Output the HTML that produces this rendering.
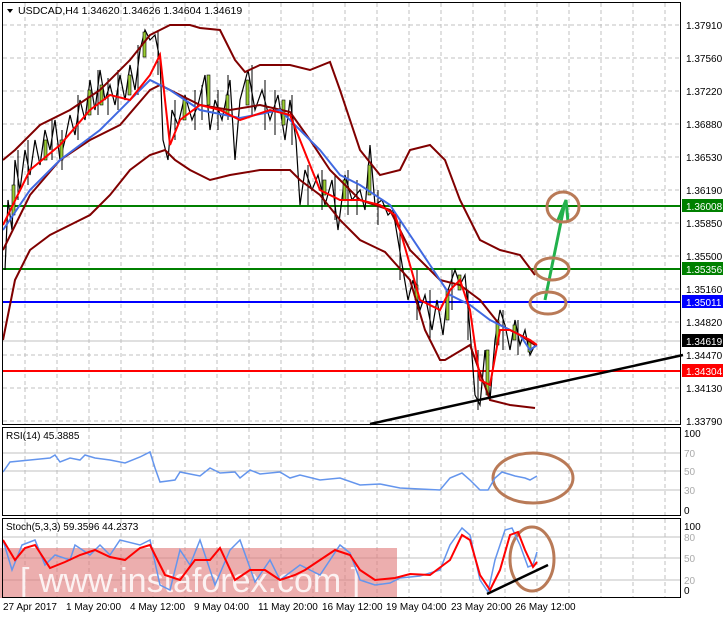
<!DOCTYPE html>
<html><head><meta charset="utf-8"><style>
body{margin:0;background:#fff;width:723px;height:618px;overflow:hidden;font-family:"Liberation Sans",sans-serif}
svg text{font-family:"Liberation Sans",sans-serif;font-size:10px}
</style></head><body>
<svg width="723" height="618" viewBox="0 0 723 618" xmlns="http://www.w3.org/2000/svg">
<rect width="723" height="618" fill="#fff"/>
<g stroke="#c0c0c0" stroke-dasharray="4,3" stroke-width="1">
<path d="M25 3V424M57 3V424M89 3V424M121 3V424M153 3V424M185 3V424M217 3V424M249 3V424M281 3V424M313 3V424M345 3V424M377 3V424M409 3V424M441 3V424M473 3V424M505 3V424M537 3V424M569 3V424M601 3V424M633 3V424M665 3V424"/>
<path d="M3 25H680M3 58H680M3 91H680M3 124H680M3 157H680M3 190H680M3 223H680M3 256H680M3 289H680M3 322H680M3 355H680M3 388H680M3 421H680"/>
<path d="M25 428V515M57 428V515M89 428V515M121 428V515M153 428V515M185 428V515M217 428V515M249 428V515M281 428V515M313 428V515M345 428V515M377 428V515M409 428V515M441 428V515M473 428V515M505 428V515M537 428V515M569 428V515M601 428V515M633 428V515M665 428V515"/>
<path d="M25 519V597M57 519V597M89 519V597M121 519V597M153 519V597M185 519V597M217 519V597M249 519V597M281 519V597M313 519V597M345 519V597M377 519V597M409 519V597M441 519V597M473 519V597M505 519V597M537 519V597M569 519V597M601 519V597M633 519V597M665 519V597"/>
</g>
<g stroke="#c0c0c0"><path d="M3 453H680M3 471H680M3 490H680M3 537H680M3 558H680M3 580H680"/></g>
<rect x="0" y="548" width="397" height="50" fill="#e07878" opacity="0.6"/>
<text x="20" y="592" fill="#fff" style="font-size:34px" opacity="0.85">[  www.instaforex.com  ]</text>
<path d="M3 206H680" stroke="#008000" stroke-width="2"/>
<path d="M3 269H680" stroke="#008000" stroke-width="2"/>
<path d="M3 302H680" stroke="#0000ff" stroke-width="2"/>
<path d="M3 341H680" stroke="#c0c0c0"/>
<path d="M3 371H680" stroke="#ff0000" stroke-width="2"/>
<polyline fill="none" stroke="#000" stroke-width="1.2" points="5,270 8,200 12,230 15,160 20,190 25,150 30,175 35,140 40,165 45,130 50,150 55,120 60,160 65,140 70,115 75,135 80,100 85,120 90,80 95,110 100,70 105,100 110,85 115,105 120,75 125,100 130,65 135,90 140,50 145,30 150,40 155,35 160,60 163,140 168,160 172,110 178,125 185,95 192,120 198,105 205,75 210,130 215,100 222,120 230,80 235,160 240,100 248,70 255,110 262,90 270,120 278,95 285,140 290,100 296,140 300,205 305,170 312,190 318,175 325,205 332,180 338,230 345,175 352,200 360,190 365,210 370,145 375,205 382,200 388,215 393,210 398,240 403,270 408,300 413,280 420,310 425,295 432,330 437,300 443,335 448,290 455,270 460,285 465,275 470,330 475,395 480,405 485,350 490,400 495,340 500,310 505,325 510,350 515,320 520,345 525,330 530,355 535,345"/>
<g stroke="#000" stroke-width="1"><path d="M18 150V200M28 140V185M52 120V160M62 130V170M78 95V140M98 70V115M108 78V115M118 70V110M138 45V95M158 30V75M175 100V140M195 90V130M202 85V120M218 90V130M228 75V120M252 65V115M265 80V130M275 90V135M292 95V145M308 165V205M322 170V210M335 175V220M348 170V215M357 180V215M378 190V225M400 220V280M417 270V320M430 290V340M452 270V310M468 290V340M478 350V410M503 310V350M518 320V355"/></g>
<g fill="#9acd32" stroke="#000" stroke-width="0.6">
<rect x="12" y="185" width="3" height="30"/><rect x="44" y="140" width="3" height="20"/><rect x="88" y="90" width="3" height="25"/><rect x="128" y="75" width="3" height="20"/><rect x="143" y="32" width="3" height="25"/><rect x="183" y="100" width="3" height="20"/><rect x="207" y="75" width="3" height="30"/><rect x="246" y="80" width="3" height="25"/><rect x="282" y="100" width="3" height="25"/><rect x="343" y="180" width="3" height="20"/><rect x="368" y="165" width="3" height="30"/><rect x="446" y="290" width="3" height="30"/><rect x="458" y="275" width="3" height="15"/><rect x="486" y="350" width="3" height="45"/><rect x="496" y="320" width="3" height="25"/><rect x="513" y="325" width="3" height="15"/><rect x="528" y="340" width="3" height="12"/><rect x="60" y="140" width="3" height="20"/><rect x="100" y="85" width="3" height="20"/><rect x="226" y="95" width="3" height="20"/><rect x="323" y="180" width="3" height="15"/><rect x="415" y="285" width="3" height="15"/>
</g>
<g fill="none" stroke="#800000" stroke-width="2">
<polyline points="3,160 15,150 40,125 70,110 100,90 130,60 150,35 170,25 190,25 200,28 220,30 235,60 245,72 260,65 290,65 310,70 330,62 340,90 360,150 380,175 400,170 410,150 430,145 445,160 460,200 480,240 500,250 520,255 535,275"/>
<polyline points="3,340 15,280 30,250 50,235 70,225 90,215 110,195 130,170 150,155 165,150 175,160 190,170 210,180 230,175 260,170 290,170 300,180 320,195 340,220 360,240 385,252 410,280 425,330 440,360 445,360 470,345 490,400 510,405 535,408"/>
<polyline points="3,250 30,195 60,160 90,140 120,125 150,90 160,85 180,95 200,105 230,110 260,105 290,112 310,140 330,170 360,200 390,210 410,250 440,280 460,285 480,300 500,325 520,335 535,345"/>
</g>
<polyline fill="none" stroke="#4169e1" stroke-width="2" points="3,230 30,190 60,160 100,130 150,80 170,90 200,110 240,118 280,110 300,130 320,150 340,175 360,185 390,205 410,235 430,265 450,295 470,305 490,320 520,335 530,350 537,345"/>
<polyline fill="none" stroke="#ff0000" stroke-width="2" points="3,225 30,170 60,145 90,110 110,95 130,100 150,75 160,55 170,145 180,120 200,105 220,110 240,120 270,110 290,115 310,165 320,190 340,200 360,200 380,205 395,215 400,230 420,300 440,310 450,290 460,280 470,310 480,380 490,385 500,330 510,330 520,335 530,340 537,345"/>
<path d="M370 424L683 355" stroke="#000" stroke-width="2.5"/>
<path d="M545 300L564 207" stroke="#22b14c" stroke-width="3"/>
<path d="M558 220L566 200L568 222" fill="none" stroke="#22b14c" stroke-width="3"/>
<g fill="none" stroke="#b97a57" stroke-width="3">
<ellipse cx="563" cy="207" rx="16" ry="15"/><ellipse cx="552" cy="269" rx="17" ry="11"/><ellipse cx="548" cy="303" rx="18" ry="11"/>
<ellipse cx="533" cy="478" rx="40" ry="25"/><ellipse cx="532" cy="559" rx="22" ry="32"/>
</g>
<polyline fill="none" stroke="#6495ed" stroke-width="1.5" points="3,472 10,462 30,460 50,458 55,455 60,462 70,458 80,460 85,455 95,458 110,460 125,463 140,457 150,452 155,468 160,482 175,480 180,472 190,474 200,476 210,468 220,473 235,472 240,478 250,470 260,474 280,472 290,478 300,475 320,480 340,478 360,485 380,484 400,488 420,489 440,490 450,478 462,473 470,480 480,490 488,490 495,478 502,472 515,476 525,478 530,480 537,476"/>
<polyline fill="none" stroke="#6495ed" stroke-width="1.5" points="3,540 12,570 22,545 35,540 45,565 55,555 70,560 75,545 90,555 100,545 110,555 120,540 140,545 150,540 160,585 170,590 180,550 190,565 200,540 215,585 230,550 240,540 255,582 270,560 280,580 300,565 320,575 340,545 350,553 360,580 375,585 390,583 400,578 420,576 440,570 450,545 462,528 470,535 480,580 488,592 495,560 505,530 512,528 520,545 528,567 533,565 537,552"/>
<polyline fill="none" stroke="#ff0000" stroke-width="2" points="3,540 15,560 25,548 35,545 50,568 65,562 80,555 95,550 110,557 125,560 140,548 150,545 165,575 180,580 195,560 210,560 220,548 235,580 250,570 265,570 280,580 295,575 305,570 320,560 335,550 350,555 360,570 375,580 395,578 410,574 430,575 450,560 462,535 470,540 480,575 490,590 500,570 510,535 518,532 525,550 533,567 537,562"/>
<path d="M487 594L548 565" stroke="#000" stroke-width="2.5"/>
<g fill="none" stroke="#000" stroke-width="1">
<rect x="2.5" y="2.5" width="678" height="422"/>
<rect x="2.5" y="427.5" width="678" height="88"/>
<rect x="2.5" y="518.5" width="678" height="79"/>
</g>
<path d="M7 9L13 9L10 13Z" fill="#000"/>
<text x="18" y="14" fill="#000" style="font-size:10.5px">USDCAD,H4  1.34620 1.34626 1.34604 1.34619</text>
<text x="6" y="439" fill="#000">RSI(14) 45.3885</text>
<text x="6" y="530" fill="#000">Stoch(5,3,3) 59.3596 44.2373</text>
<g fill="#000">
<text x="686" y="29">1.37910</text><text x="686" y="62">1.37560</text><text x="686" y="95">1.37220</text><text x="686" y="128">1.36880</text><text x="686" y="161">1.36530</text><text x="686" y="194">1.36190</text><text x="686" y="227">1.35850</text><text x="686" y="260">1.35500</text><text x="686" y="293">1.35160</text><text x="686" y="326">1.34820</text><text x="686" y="359">1.34470</text><text x="686" y="392">1.34130</text><text x="686" y="425">1.33790</text>
</g>
<rect x="682" y="199" width="41" height="13" fill="#008000"/><text x="686" y="210" fill="#fff">1.36008</text>
<rect x="682" y="262" width="41" height="13" fill="#008000"/><text x="686" y="273" fill="#fff">1.35356</text>
<rect x="682" y="295" width="41" height="13" fill="#0000ff"/><text x="686" y="306" fill="#fff">1.35011</text>
<rect x="682" y="334" width="41" height="13" fill="#000"/><text x="686" y="345" fill="#fff">1.34619</text>
<rect x="682" y="364" width="41" height="13" fill="#ff0000"/><text x="686" y="375" fill="#fff">1.34304</text>
<g fill="#000"><text x="684" y="437">100</text><text x="684" y="514">0</text><text x="684" y="530">100</text><text x="684" y="594">0</text></g>
<g fill="#aaa"><text x="684" y="457">70</text><text x="684" y="475">50</text><text x="684" y="494">30</text><text x="684" y="541">80</text><text x="684" y="562">50</text><text x="684" y="584">20</text></g>
<g fill="#000">
<text x="3" y="610">27 Apr 2017</text><text x="66" y="610">1 May 20:00</text><text x="130" y="610">4 May 12:00</text><text x="194" y="610">9 May 04:00</text><text x="258" y="610">11 May 20:00</text><text x="322" y="610">16 May 12:00</text><text x="386" y="610">19 May 04:00</text><text x="451" y="610">23 May 20:00</text><text x="515" y="610">26 May 12:00</text>
</g>
</svg>
</body></html>
